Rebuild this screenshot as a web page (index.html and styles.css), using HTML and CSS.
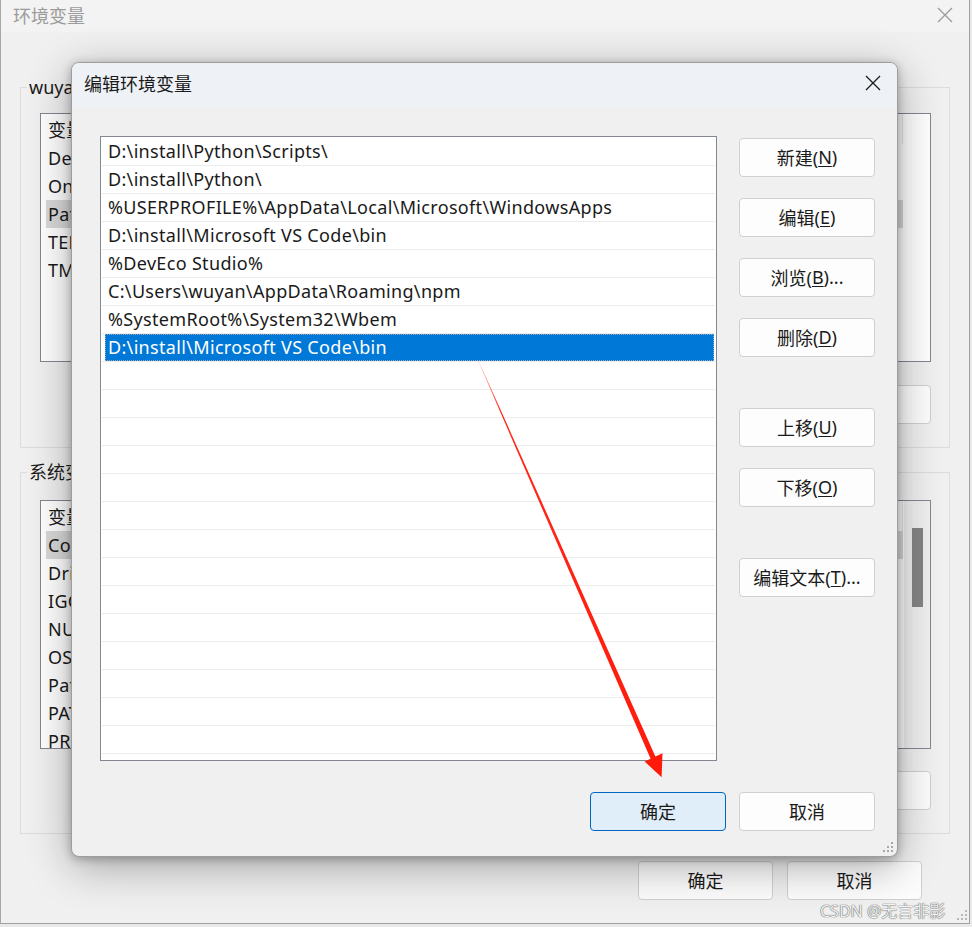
FILE: index.html
```html
<!DOCTYPE html>
<html lang="zh-CN">
<head>
<meta charset="utf-8">
<title>编辑环境变量</title>
<link rel="stylesheet" href="styles.css">
</head>
<body>
<div class="bgwin">
  <div class="bg-title">
    <span>环境变量</span>
    <svg class="bg-close" width="16" height="16" viewBox="0 0 16 16"><path d="M1 1L15 15M15 1L1 15" stroke="#9a9a9a" stroke-width="1.3" fill="none"/></svg>
  </div>
  <div class="bg-body">
    <div class="group g1">
      <span class="group-label">wuyan 的用户变量(<u>U</u>)</span>
      <div class="bg-list">
        <div class="bg-main">
          <div class="bg-head"><span class="c1">变量</span><span>值</span></div>
          <div class="bg-row"><span class="c1">DevEco Studio</span></div>
          <div class="bg-row"><span class="c1">OneDrive</span></div>
          <div class="bg-row sel"><span class="c1">Path</span></div>
          <div class="bg-row"><span class="c1">TEMP</span></div>
          <div class="bg-row"><span class="c1">TMP</span></div>
        </div>
      </div>
      <div class="bg-btns">
        <div class="btn bgbtn">新建(<u>N</u>)...</div>
        <div class="btn bgbtn">编辑(<u>E</u>)...</div>
        <div class="btn bgbtn">删除(<u>D</u>)</div>
      </div>
    </div>
    <div class="group g2">
      <span class="group-label">系统变量(<u>S</u>)</span>
      <div class="bg-list">
        <div class="bg-main">
          <div class="bg-head"><span class="c1">变量</span><span>值</span></div>
          <div class="bg-row sel"><span class="c1">ComSpec</span></div>
          <div class="bg-row"><span class="c1">DriverData</span></div>
          <div class="bg-row"><span class="c1">IGCCSVC_DB</span></div>
          <div class="bg-row"><span class="c1">NUMBER_OF_PROCESSORS</span></div>
          <div class="bg-row"><span class="c1">OS</span></div>
          <div class="bg-row"><span class="c1">Path</span></div>
          <div class="bg-row"><span class="c1">PATHEXT</span></div>
          <div class="bg-row"><span class="c1">PROCESSOR_ARCHITECTURE</span></div>
        </div>
        <div class="bg-scroll"><div class="thumb"></div></div>
      </div>
      <div class="bg-btns">
        <div class="btn bgbtn">新建(<u>W</u>)...</div>
        <div class="btn bgbtn">编辑(<u>I</u>)...</div>
        <div class="btn bgbtn">删除(<u>L</u>)</div>
      </div>
    </div>
    <div class="bg-foot">
      <div class="btn footbtn">确定</div>
      <div class="btn footbtn">取消</div>
    </div>
  </div>
</div>

<div class="dialog">
  <div class="dlg-title">
    <span>编辑环境变量</span>
    <svg width="16" height="16" viewBox="0 0 16 16"><path d="M1 1L15 15M15 1L1 15" stroke="#1a1a1a" stroke-width="1.3" fill="none"/></svg>
  </div>
  <div class="dlg-body">
    <div class="dlg-main">
      <div class="dlg-list">
        <div class="row"><div class="cell">D:\install\Python\Scripts\</div></div>
        <div class="row"><div class="cell">D:\install\Python\</div></div>
        <div class="row"><div class="cell">%USERPROFILE%\AppData\Local\Microsoft\WindowsApps</div></div>
        <div class="row"><div class="cell">D:\install\Microsoft VS Code\bin</div></div>
        <div class="row"><div class="cell">%DevEco Studio%</div></div>
        <div class="row"><div class="cell">C:\Users\wuyan\AppData\Roaming\npm</div></div>
        <div class="row"><div class="cell">%SystemRoot%\System32\Wbem</div></div>
        <div class="row"><div class="cell sel">D:\install\Microsoft VS Code\bin</div></div>
        <div class="row"><div class="cell"></div></div>
        <div class="row"><div class="cell"></div></div>
        <div class="row"><div class="cell"></div></div>
        <div class="row"><div class="cell"></div></div>
        <div class="row"><div class="cell"></div></div>
        <div class="row"><div class="cell"></div></div>
        <div class="row"><div class="cell"></div></div>
        <div class="row"><div class="cell"></div></div>
        <div class="row"><div class="cell"></div></div>
        <div class="row"><div class="cell"></div></div>
        <div class="row"><div class="cell"></div></div>
        <div class="row"><div class="cell"></div></div>
        <div class="row"><div class="cell"></div></div>
        <div class="row"><div class="cell"></div></div>
        <div class="row"><div class="cell"></div></div>
      </div>
      <div class="dlg-btns">
        <div class="btn">新建(<u>N</u>)</div>
        <div class="btn">编辑(<u>E</u>)</div>
        <div class="btn">浏览(<u>B</u>)...</div>
        <div class="btn">删除(<u>D</u>)</div>
        <div class="btn far">上移(<u>U</u>)</div>
        <div class="btn">下移(<u>O</u>)</div>
        <div class="btn far">编辑文本(<u>T</u>)...</div>
      </div>
    </div>
    <div class="dlg-foot">
      <div class="btn primary">确定</div>
      <div class="btn">取消</div>
    </div>
  </div>
  <svg class="grip" width="12" height="12" viewBox="0 0 12 12">
    <rect x="9" y="1" width="2" height="2" fill="#a8a8a8"/>
    <rect x="5" y="5" width="2" height="2" fill="#a8a8a8"/>
    <rect x="9" y="5" width="2" height="2" fill="#a8a8a8"/>
    <rect x="1" y="9" width="2" height="2" fill="#a8a8a8"/>
    <rect x="5" y="9" width="2" height="2" fill="#a8a8a8"/>
    <rect x="9" y="9" width="2" height="2" fill="#a8a8a8"/>
  </svg>
</div>

<svg class="arrow" width="972" height="927" viewBox="0 0 972 927">
  <defs>
    <linearGradient id="ag" x1="478" y1="360" x2="661" y2="777" gradientUnits="userSpaceOnUse">
      <stop offset="0" stop-color="#ff2a1a" stop-opacity="0.15"/>
      <stop offset="0.12" stop-color="#ff2a1a" stop-opacity="1"/>
      <stop offset="1" stop-color="#ff1a0a"/>
    </linearGradient>
  </defs>
  <polygon points="478.3,359.9 655.4,756.4 662.5,753.3 661.6,777.2 644.6,761.5 650.6,758.8 477.7,360.1" fill="url(#ag)"/>
</svg>

<svg class="bg-grip" width="12" height="12" viewBox="0 0 12 12">
  <rect x="9" y="1" width="2" height="2" fill="#b8b8b8"/>
  <rect x="5" y="5" width="2" height="2" fill="#b8b8b8"/>
  <rect x="9" y="5" width="2" height="2" fill="#b8b8b8"/>
  <rect x="1" y="9" width="2" height="2" fill="#b8b8b8"/>
  <rect x="5" y="9" width="2" height="2" fill="#b8b8b8"/>
  <rect x="9" y="9" width="2" height="2" fill="#b8b8b8"/>
</svg>

<div class="watermark">CSDN @无言非影</div>
</body>
</html>
```
FILE: styles.css
```css
* { box-sizing: border-box; }
html, body { margin: 0; padding: 0; }
body {
  width: 972px;
  height: 927px;
  overflow: hidden;
  position: relative;
  background: #e9e9e9;
  font-family: "Noto Sans", "Noto Sans CJK SC", sans-serif;
  font-size: 18px;
  color: #1a1a1a;
}
u { text-decoration: underline; text-underline-offset: 2px; text-decoration-thickness: 1px; }

/* background window */
.bgwin {
  width: 970px;
  height: 924px;
  background: #f0f0f0;
  border-left: 1px solid #a8a8a8;
  border-right: 1px solid #a0a0a0;
  border-bottom: 1px solid #a0a0a0;
}
.bg-title {
  height: 32px;
  display: flex;
  align-items: center;
  justify-content: space-between;
  padding: 0 16px 2px 12px;
  background: #f3f3f3;
  color: #9b9b9b;
}
.bg-body { padding: 55px 19px 0 19px; }
.group { position: relative; border: 1px solid #dcdcdc; }
.g1 { height: 361px; padding: 25px 18px 0 19px; }
.g2 { height: 362px; margin-top: 24px; padding: 27px 18px 0 19px; }
.group-label {
  position: absolute;
  top: -14px;
  left: 6px;
  padding: 0 2px;
  line-height: 26px;
  background: #f0f0f0;
  white-space: nowrap;
}
.bg-list {
  height: 249px;
  display: flex;
  background: #fff;
  border: 1px solid #828790;
  overflow: hidden;
}
.bg-main { flex: 1; overflow: hidden; }
.bg-head {
  width: 862px;
  height: 30px;
  display: flex;
  align-items: center;
  padding-left: 7px;
  border-right: 1px solid #e5e5e5;
}
.c1 { width: 300px; white-space: nowrap; overflow: hidden; letter-spacing: 0.3px; }
.bg-row {
  width: 857px;
  height: 28px;
  line-height: 28px;
  margin-left: 5px;
  padding-left: 2px;
  display: flex;
  white-space: nowrap;
}
.bg-row.sel { background: #d9d9d9; }
.bg-scroll { width: 26px; background: #f0f0f0; padding: 27px 0 0 8px; }
.thumb { width: 11px; height: 79px; background: #858585; }
.bg-btns { display: flex; justify-content: flex-end; gap: 14px; margin-top: 23px; }
.g2 .bg-btns { margin-top: 22px; }
.bgbtn { width: 136px; }
.bg-foot { display: flex; justify-content: flex-end; gap: 14px; margin-top: 27px; padding-right: 28px; }
.footbtn { width: 135px; }

/* buttons */
.btn {
  height: 39px;
  display: flex;
  align-items: center;
  justify-content: center;
  border: 1px solid #d0d0d0;
  border-radius: 4px;
  background: #fdfdfd;
  color: #1a1a1a;
  white-space: nowrap;
  padding-bottom: 1px;
}
.btn.primary { background: #e0eef9; border-color: #0067c0; }

/* dialog */
.dialog {
  position: absolute;
  left: 71px;
  top: 62px;
  width: 827px;
  height: 795px;
  border: 1px solid #9d9d9d;
  border-radius: 8px;
  background: #f0f0f0;
  box-shadow: 0 2px 10px rgba(0, 0, 0, 0.28), 0 10px 44px rgba(0, 0, 0, 0.32);
  overflow: hidden;
}
.dlg-title {
  height: 44px;
  display: flex;
  align-items: center;
  justify-content: space-between;
  padding: 0 16px 4px 12px;
  background: #eef2f7;
  color: #1a1a1a;
}
.dlg-body { padding: 29px 22px 0 28px; }
.dlg-main { display: flex; gap: 22px; }
.dlg-list {
  width: 617px;
  height: 625px;
  border: 1px solid #828790;
  background: #fff;
  padding: 1px 1px 0 1px;
  overflow: hidden;
}
.row {
  height: 28px;
  border-bottom: 1px solid #ececec;
  padding: 0 1px 0 3px;
}
.cell {
  height: 27px;
  line-height: 27px;
  padding-left: 3px;
  white-space: nowrap;
  letter-spacing: 0.33px;
}
.cell.sel {
  background: #0078d7;
  color: #fff;
  outline: 1px dotted #9aa8b8;
  outline-offset: -1px;
}
.dlg-btns {
  width: 136px;
  display: flex;
  flex-direction: column;
  gap: 21px;
  padding-top: 2px;
}
.dlg-btns .far { margin-top: 30px; }
.dlg-foot { display: flex; justify-content: flex-end; gap: 13px; margin-top: 31px; }
.dlg-foot .btn { width: 136px; }
.grip { position: absolute; right: 3px; bottom: 3px; }

/* overlays */
.arrow { position: absolute; left: 0; top: 0; pointer-events: none; }
.bg-grip { position: absolute; left: 956px; top: 909px; }
.watermark {
  position: absolute;
  left: 820px;
  top: 898px;
  font-size: 16px;
  color: #f2f2f2;
  text-shadow: 0 0 1px #555, 0 0 1px #555;
  white-space: nowrap;
}
```
